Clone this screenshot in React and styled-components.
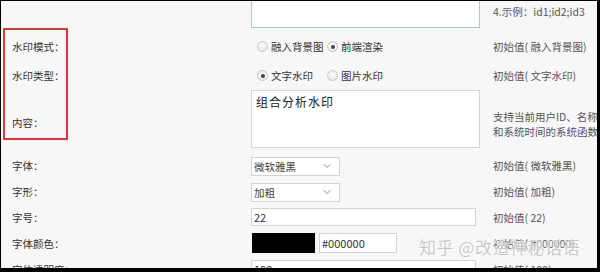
import React from 'react'
import styled, { createGlobalStyle } from 'styled-components'
import { ChevronDown } from 'lucide-react'

const GlobalStyle = createGlobalStyle`
  body {
    margin: 0;
    font-family: "Noto Sans CJK SC", "Noto Sans", sans-serif;
  }
`;

const Frame = styled.div`
  position: relative;
  width: 600px;
  height: 272px;
  box-sizing: border-box;
  border-style: solid;
  border-color: #000;
  border-width: 1px 3px 4px 1px;
  background: #f7f7f7;
  overflow: hidden;
  padding-left: 11px;
  color: #333;
  font-size: 10.5px;
`;

const Form = styled.div`
  display: flex;
  flex-direction: column;
`;

const Row = styled.div`
  display: grid;
  grid-template-columns: 239px 242px 1fr;
  align-items: center;
  height: ${p => p.$h || 26}px;
  margin-top: ${p => p.$mt || 0}px;
  white-space: nowrap;
`;

const Label = styled.div`
  padding-top: ${p => p.$pt || 0}px;
  color: #333;
`;

const Hint = styled.div`
  color: #555;
  line-height: 15px;
  padding-top: ${p => p.$pt || 0}px;
  align-self: ${p => p.$end ? 'end' : 'center'};
  padding-bottom: ${p => p.$pb || 0}px;
`;

const TextArea = styled.textarea`
  box-sizing: border-box;
  width: 229px;
  height: ${p => p.$h}px;
  margin: 0;
  padding: 3px 4px;
  resize: none;
  background: #fff;
  border: 1px solid ${p => p.$focus ? '#b3c3d8' : '#d6d6d6'};
  font-family: "Noto Sans CJK SC", sans-serif;
  font-size: 12px;
  letter-spacing: 1px;
  color: #222;
  line-height: 16px;
  outline: none;
`;

const RadioGroup = styled.div`
  display: flex;
  align-items: center;
  padding-left: 6px;
`;

const Option = styled.label`
  display: flex;
  align-items: center;
  gap: 3px;
  width: 70px;
  color: #333;
`;

const Dot = styled.span`
  box-sizing: border-box;
  width: 11px;
  height: 11px;
  border-radius: 50%;
  border: 1px solid #c9c9c9;
  background: radial-gradient(circle at 50% 40%, #fbfbfb 0%, #e2e2e2 100%);
  display: flex;
  align-items: center;
  justify-content: center;
  &::after {
    content: '';
    width: 4px;
    height: 4px;
    border-radius: 50%;
    background: ${p => p.$on ? '#444' : 'transparent'};
  }
`;

const Select = styled.div`
  box-sizing: border-box;
  width: 89px;
  height: 19px;
  margin-top: 2px;
  background: #fff;
  border: 1px solid #d4d4d4;
  display: flex;
  align-items: center;
  justify-content: space-between;
  padding: 0 6px 0 2px;
  color: #444;
`;

const Input = styled.input`
  box-sizing: border-box;
  width: ${p => p.$w}px;
  height: ${p => p.$h || 18}px;
  margin: 0;
  padding: 0 2px;
  background: #fff;
  border: 1px solid #d4d4d4;
  font-family: "Noto Sans CJK SC", sans-serif;
  font-size: 11px;
  color: #333;
  outline: none;
`;

const ColorField = styled.div`
  display: flex;
  align-items: center;
  gap: 4px;
  padding-left: 1px;
`;

const Swatch = styled.div`
  width: 63px;
  height: 20px;
  background: #000;
`;

const RedBox = styled.div`
  position: absolute;
  left: 2px;
  top: 27px;
  width: 65px;
  height: 112px;
  box-sizing: border-box;
  border: 2px solid #d83a3c;
`;

const Watermark = styled.div`
  position: absolute;
  left: 418px;
  top: 233px;
  font-size: 17px;
  letter-spacing: 0.5px;
  color: rgba(190, 190, 190, 0.85);
  text-shadow: 0 0 2px #fff, 0 0 1px #fff;
  white-space: nowrap;
`;

function Radios({ options, value }) {
  return (
    <RadioGroup>
      {options.map(o => (
        <Option key={o}>
          <Dot $on={o === value} />
          {o}
        </Option>
      ))}
    </RadioGroup>
  )
}

export default function App() {
  return (
    <Frame>
      <GlobalStyle />
      <Form>
        <Row $h={60} $mt={-33}>
          <Label />
          <TextArea $h={60} $focus readOnly value="" />
          <Hint $end $pb={9}>4.示例：id1;id2;id3</Hint>
        </Row>
        <Row $h={29} $mt={4}>
          <Label>水印模式：</Label>
          <Radios options={['融入背景图', '前端渲染']} value="前端渲染" />
          <Hint>初始值( 融入背景图)</Hint>
        </Row>
        <Row $h={29}>
          <Label>水印类型：</Label>
          <Radios options={['文字水印', '图片水印']} value="文字水印" />
          <Hint>初始值( 文字水印)</Hint>
        </Row>
        <Row $h={58}>
          <Label $pt={6}>内容：</Label>
          <TextArea $h={58} readOnly value="组合分析水印" />
          <Hint $pt={9}>支持当前用户ID、名称、<br />和系统时间的系统函数</Hint>
        </Row>
        <Row $mt={4}>
          <Label>字体：</Label>
          <Select>微软雅黑<ChevronDown size={12} strokeWidth={1.5} color="#666" /></Select>
          <Hint>初始值( 微软雅黑)</Hint>
        </Row>
        <Row>
          <Label>字形：</Label>
          <Select>加粗<ChevronDown size={12} strokeWidth={1.5} color="#666" /></Select>
          <Hint>初始值( 加粗)</Hint>
        </Row>
        <Row>
          <Label>字号：</Label>
          <Input $w={225} readOnly value="22" />
          <Hint>初始值( 22)</Hint>
        </Row>
        <Row>
          <Label>字体颜色：</Label>
          <ColorField>
            <Swatch />
            <Input $w={78} $h={20} readOnly value="#000000" />
          </ColorField>
          <Hint>初始值( #000000)</Hint>
        </Row>
        <Row>
          <Label>字体透明度：</Label>
          <Input $w={225} readOnly value="100" />
          <Hint>初始值( 100)</Hint>
        </Row>
      </Form>
      <RedBox />
      <Watermark>知乎 @改造神秘话语</Watermark>
    </Frame>
  )
}
